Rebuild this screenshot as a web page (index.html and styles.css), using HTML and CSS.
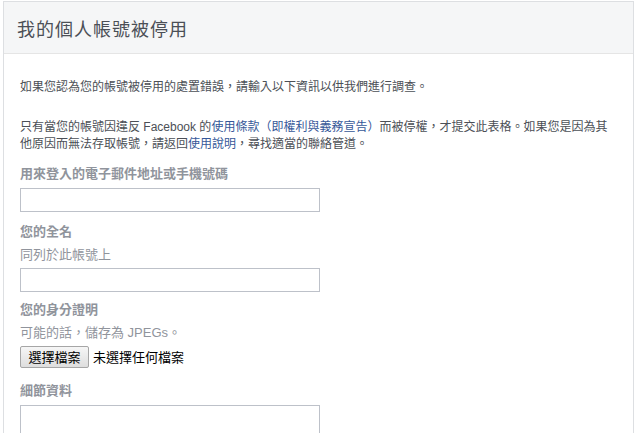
FILE: index.html
```html
<!DOCTYPE html>
<html lang="zh-Hant">
<head>
<meta charset="utf-8">
<title>我的個人帳號被停用</title>
<link rel="stylesheet" href="styles.css">
</head>
<body>
<div class="card">
  <div class="card-header">我的個人帳號被停用</div>
  <div class="card-body">
    <p class="intro">如果您認為您的帳號被停用的處置錯誤，請輸入以下資訊以供我們進行調查。</p>
    <p class="para">只有當您的帳號因違反 Facebook 的<a href="#">使用條款（即權利與義務宣告）</a>而被停權，才提交此表格。如果您是因為其他原因而無法存取帳號，請返回<a href="#">使用說明</a>，尋找適當的聯絡管道。</p>

    <div class="field field-email">
      <div class="label">用來登入的電子郵件地址或手機號碼</div>
      <input class="text-input" type="text">
    </div>

    <div class="field field-name">
      <div class="label">您的全名</div>
      <div class="hint">同列於此帳號上</div>
      <input class="text-input" type="text">
    </div>

    <div class="field field-id">
      <div class="label">您的身分證明</div>
      <div class="hint">可能的話，儲存為 JPEGs。</div>
      <div class="file-row">
        <span class="file-btn">選擇檔案</span>
        <span class="file-none">未選擇任何檔案</span>
      </div>
    </div>

    <div class="field">
      <div class="label">細節資料</div>
      <textarea class="text-area"></textarea>
    </div>
  </div>
</div>
</body>
</html>
```

FILE: styles.css
```css
html, body {
  margin: 0;
  padding: 0;
  background: #ffffff;
}

body {
  font-family: "Liberation Sans", "Noto Sans CJK TC", sans-serif;
  color: #4b4f56;
  overflow: hidden;
}

.card {
  margin: 1px 0 0 3px;
  width: 629px;
  border: 1px solid #dddfe2;
  border-bottom: none;
  height: 440px;
}

.card-header {
  height: 50px;
  background: #f5f6f7;
  border-bottom: 1px solid #e5e5e5;
  padding-left: 13px;
  display: flex;
  align-items: center;
  font-size: 18px;
  letter-spacing: 1px;
  color: #4b4f56;
  padding-top: 1px;
}

.card-body {
  padding: 25px 16px 0 16px;
  font-size: 12px;
  line-height: 17px;
}

.intro {
  margin: 0 0 23px 0;
  color: #4b4f56;
}

.para {
  margin: 0 0 12px 0;
  width: 590px;
  color: #4b4f56;
}

.para a {
  color: #365899;
  text-decoration: none;
}

.field {
  margin-bottom: 11px;
}

.field-name {
  margin-bottom: 9px;
}

.field-id {
  margin-bottom: 14px;
}

.label {
  font-size: 13px;
  font-weight: bold;
  color: #90949c;
  line-height: 17px;
  margin-bottom: 6px;
}

.hint {
  font-size: 13px;
  color: #90949c;
  line-height: 17px;
  margin-bottom: 5px;
}

.text-input {
  display: block;
  box-sizing: border-box;
  width: 300px;
  height: 24px;
  margin: 0;
  border: 1px solid #bdc1c9;
  background: #fff;
  padding: 0 4px;
}

.file-row {
  display: flex;
  align-items: center;
  gap: 4px;
  height: 22px;
  margin-top: 1px;
  font-size: 13px;
}

.file-btn {
  box-sizing: border-box;
  height: 22px;
  width: 69px;
  display: flex;
  align-items: center;
  justify-content: center;
  border: 1px solid #a6a6a6;
  border-radius: 2px;
  background: linear-gradient(#f6f6f6, #dedede);
  color: #000;
}

.file-none {
  color: #000;
}

.text-area {
  display: block;
  box-sizing: border-box;
  width: 300px;
  height: 60px;
  margin: 0;
  border: 1px solid #bdc1c9;
  resize: none;
}
```
